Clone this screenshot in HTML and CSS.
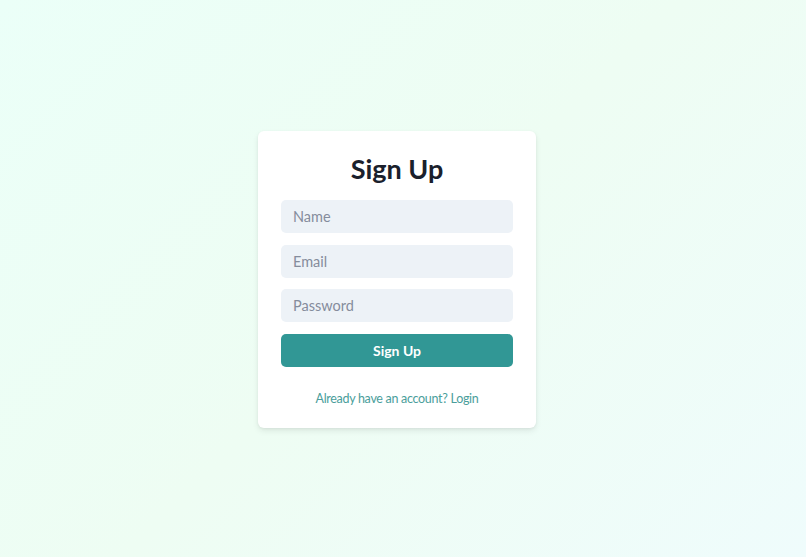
FILE: index.html
```html
<!DOCTYPE html>
<html lang="en">
<head>
<meta charset="utf-8">
<title>Sign Up</title>
<link rel="stylesheet" href="styles.css">
</head>
<body>
<main class="page">
  <form class="card">
    <h1 class="title">Sign Up</h1>
    <input class="field" type="text" placeholder="Name">
    <input class="field" type="email" placeholder="Email">
    <input class="field" type="password" placeholder="Password">
    <button class="btn" type="button">Sign Up</button>
    <p class="alt"><a class="alt-link" href="#">Already have an account? Login</a></p>
  </form>
</main>
</body>
</html>
```
FILE: styles.css
```css
* { box-sizing: border-box; }
html, body { margin: 0; height: 100%; }
body {
  font-family: Lato, "Open Sans", sans-serif;
  background: linear-gradient(135deg, #ebfff8 0%, #eefdf3 50%, #effcfc 100%);
}
.page {
  min-height: 100vh;
  display: flex;
  align-items: flex-start;
  justify-content: center;
  padding-top: 131px;
  padding-right: 12px;
}
.card {
  width: 278px;
  background: #ffffff;
  border-radius: 6px;
  box-shadow: 0 3px 6px rgba(0,0,0,0.08), 0 1px 3px rgba(0,0,0,0.05);
  padding: 22px 23px 19px;
  display: flex;
  flex-direction: column;
  gap: 11.5px;
}
.title {
  margin: 0 0 3.5px;
  text-align: center;
  font-size: 27px;
  font-weight: 700;
  color: #1a202c;
  line-height: 32px;
}
.field {
  height: 33px;
  border: none;
  border-radius: 5px;
  background: #edf2f7;
  padding: 0 12px;
  font-family: inherit;
  font-size: 14.5px;
  color: #2d3748;
  outline: none;
}
.field::placeholder { color: #858c9c; }
.btn {
  height: 33px;
  border: none;
  border-radius: 5px;
  background: #319795;
  color: #ffffff;
  font-family: inherit;
  font-size: 14px;
  font-weight: 700;
  cursor: pointer;
}
.alt {
  margin: 11px 0 0;
  text-align: center;
  font-size: 12.5px;
  letter-spacing: -0.3px;
  line-height: 20px;
}
.alt-link {
  color: #4a9e9b;
  text-decoration: none;
}
```
